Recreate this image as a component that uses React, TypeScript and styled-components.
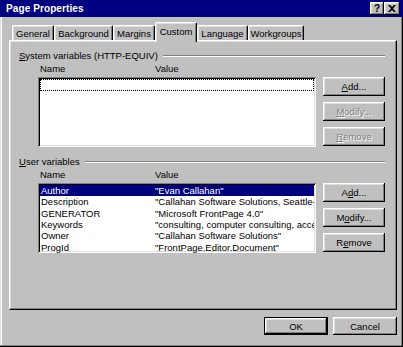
import React from 'react';
import styled, { createGlobalStyle } from 'styled-components';

type Variable = { name: string; value: string };

const tabs = [
  { label: 'General', width: 42 },
  { label: 'Background', width: 59 },
  { label: 'Margins', width: 42 },
  { label: 'Custom', width: 42, active: true },
  { label: 'Language', width: 51 },
  { label: 'Workgroups', width: 56 },
];

const userVariables: Variable[] = [
  { name: 'Author', value: '"Evan Callahan"' },
  { name: 'Description', value: '"Callahan Software Solutions, Seattle-Area database consulting"' },
  { name: 'GENERATOR', value: '"Microsoft FrontPage 4.0"' },
  { name: 'Keywords', value: '"consulting, computer consulting, access, database"' },
  { name: 'Owner', value: '"Callahan Software Solutions"' },
  { name: 'ProgId', value: '"FrontPage.Editor.Document"' },
];

const App = () => {
  return (
    <>
      <GlobalStyle />
      <Window>
        <TitleBar>
          <Title>Page Properties</Title>
          <TitleButtons>
            <TitleButton $width={14}>?</TitleButton>
            <TitleButton $width={16}>
              <svg width="8" height="7" viewBox="0 0 8 7">
                <path d="M0 0h2l2 2 2-2h2L5 3.5 8 7H6L4 5 2 7H0l3-3.5z" fill="#000" />
              </svg>
            </TitleButton>
          </TitleButtons>
        </TitleBar>
        <Content>
          <TabRow>
            {tabs.map((t) => (
              <Tab key={t.label} $width={t.width} $active={!!t.active}>
                {t.label}
              </Tab>
            ))}
          </TabRow>
          <Panel>
            <Section>
              <GroupLabel>
                <span>
                  <u>S</u>ystem variables (HTTP-EQUIV)
                </span>
                <Rule />
              </GroupLabel>
              <HeaderRow>
                <NameHead>Name</NameHead>
                <span>Value</span>
              </HeaderRow>
              <Body>
                <ListBox>
                  <FocusRow />
                </ListBox>
                <ButtonColumn>
                  <Button>
                    <u>A</u>dd...
                  </Button>
                  <Button $disabled>
                    <u>M</u>odify...
                  </Button>
                  <Button $disabled>
                    <u>R</u>emove
                  </Button>
                </ButtonColumn>
              </Body>
            </Section>
            <Section $gap={8}>
              <GroupLabel>
                <span>
                  <u>U</u>ser variables
                </span>
                <Rule />
              </GroupLabel>
              <HeaderRow>
                <NameHead>Name</NameHead>
                <span>Value</span>
              </HeaderRow>
              <Body>
                <ListBox>
                  {userVariables.map((v, i) => (
                    <Row key={v.name} $selected={i === 0}>
                      <NameCell>{v.name}</NameCell>
                      <ValueCell>{v.value}</ValueCell>
                    </Row>
                  ))}
                </ListBox>
                <ButtonColumn>
                  <Button>
                    A<u>d</u>d...
                  </Button>
                  <Button>
                    M<u>o</u>dify...
                  </Button>
                  <Button>
                    R<u>e</u>move
                  </Button>
                </ButtonColumn>
              </Body>
            </Section>
          </Panel>
          <Footer>
            <Button $wide $default>
              OK
            </Button>
            <Button $wide>Cancel</Button>
          </Footer>
        </Content>
      </Window>
    </>
  );
};

export default App;

const GlobalStyle = createGlobalStyle`
  html, body {
    margin: 0;
    padding: 0;
    background: #c0c0c0;
  }
  body {
    font-family: "Liberation Sans", Arial, sans-serif;
    font-size: 9.5px;
    line-height: 11px;
    color: #000;
  }
  * {
    box-sizing: border-box;
  }
`;

const Window = styled.div`
  width: 403px;
  height: 347px;
  display: flex;
  flex-direction: column;
  background: #c0c0c0;
  box-shadow: inset -1px -1px #000, inset -2px -2px #808080, inset 1px 0 #dfdfdf, inset 2px 0 #fff;
`;

const TitleBar = styled.div`
  height: 17px;
  background: #000080;
  display: flex;
  align-items: center;
  justify-content: space-between;
  padding: 0 3px 0 6px;
`;

const Title = styled.div`
  color: #fff;
  font-weight: 700;
  font-size: 10px;
  letter-spacing: 0.1px;
`;

const TitleButtons = styled.div`
  display: flex;
  gap: 0;
`;

const TitleButton = styled.div<{ $width: number }>`
  width: ${({ $width }) => $width}px;
  height: 13px;
  background: #c0c0c0;
  display: flex;
  align-items: center;
  justify-content: center;
  font-weight: 700;
  font-size: 10px;
  box-shadow: inset -1px -1px #000, inset 1px 1px #fff, inset -2px -2px #808080, inset 2px 2px #dfdfdf;
`;

const Content = styled.div`
  flex: 1;
  display: flex;
  flex-direction: column;
  padding: 5px 6px 0 9px;
`;

const TabRow = styled.div`
  display: flex;
  align-items: flex-end;
  padding-left: 3px;
  height: 18px;
`;

const Tab = styled.div<{ $width: number; $active: boolean }>`
  width: ${({ $width }) => $width}px;
  height: ${({ $active }) => ($active ? 20 : 15)}px;
  margin-bottom: ${({ $active }) => ($active ? -2 : 0)}px;
  padding-bottom: ${({ $active }) => ($active ? 3 : 0)}px;
  position: relative;
  z-index: ${({ $active }) => ($active ? 1 : 0)};
  background: #c0c0c0;
  display: flex;
  align-items: center;
  justify-content: center;
  white-space: nowrap;
  border-top: 1px solid #fff;
  border-left: 1px solid #fff;
  border-right: 1px solid #000;
  border-radius: 2px 2px 0 0;
  box-shadow: inset -1px 0 #808080, inset 1px 1px #dfdfdf;
`;

const Panel = styled.div`
  height: 270px;
  border-top: 1px solid #fff;
  border-left: 1px solid #fff;
  border-right: 1px solid #000;
  border-bottom: 1px solid #000;
  box-shadow: inset -1px -1px #808080, inset 1px 1px #dfdfdf;
  padding: 8px 11px 0 9px;
`;

const Section = styled.div<{ $gap?: number }>`
  margin-top: ${({ $gap }) => $gap ?? 0}px;
`;

const GroupLabel = styled.div`
  height: 13px;
  display: flex;
  align-items: center;
  gap: 5px;
  white-space: nowrap;
`;

const Rule = styled.div`
  flex: 1;
  height: 2px;
  border-top: 1px solid #808080;
  border-bottom: 1px solid #fff;
`;

const HeaderRow = styled.div`
  height: 13px;
  display: flex;
  align-items: center;
  padding-left: 21px;
`;

const NameHead = styled.span`
  width: 115px;
`;

const Body = styled.div`
  display: flex;
  gap: 7px;
  margin-top: 2px;
  padding-left: 19px;
`;

const ListBox = styled.div`
  width: 279px;
  height: 70px;
  background: #fff;
  padding: 2px;
  overflow: hidden;
  box-shadow: inset 1px 1px #808080, inset -1px -1px #fff, inset 2px 2px #000, inset -2px -2px #dfdfdf;
`;

const FocusRow = styled.div`
  height: 12px;
  border: 1px dotted #000;
`;

const Row = styled.div<{ $selected: boolean }>`
  height: 11.3px;
  display: flex;
  align-items: center;
  padding-left: 1px;
  white-space: nowrap;
  background: ${({ $selected }) => ($selected ? '#000080' : 'transparent')};
  color: ${({ $selected }) => ($selected ? '#fff' : '#000')};
`;

const NameCell = styled.span`
  width: 114px;
  flex-shrink: 0;
`;

const ValueCell = styled.span`
  overflow: hidden;
`;

const ButtonColumn = styled.div`
  width: 62px;
  display: flex;
  flex-direction: column;
  gap: 6px;
`;

const Button = styled.div<{ $disabled?: boolean; $wide?: boolean; $default?: boolean }>`
  width: ${({ $wide }) => ($wide ? 64 : 62)}px;
  height: ${({ $wide }) => ($wide ? 18 : 19)}px;
  display: flex;
  align-items: center;
  justify-content: center;
  white-space: nowrap;
  background: #c0c0c0;
  color: ${({ $disabled }) => ($disabled ? '#808080' : '#000')};
  text-shadow: ${({ $disabled }) => ($disabled ? '1px 1px #fff' : 'none')};
  border: ${({ $default }) => ($default ? '1px solid #000' : 'none')};
  box-shadow: inset -1px -1px #000, inset 1px 1px #fff, inset -2px -2px #808080, inset 2px 2px #dfdfdf;
`;

const Footer = styled.div`
  display: flex;
  justify-content: flex-end;
  gap: 5px;
  margin-top: 7px;
`;
